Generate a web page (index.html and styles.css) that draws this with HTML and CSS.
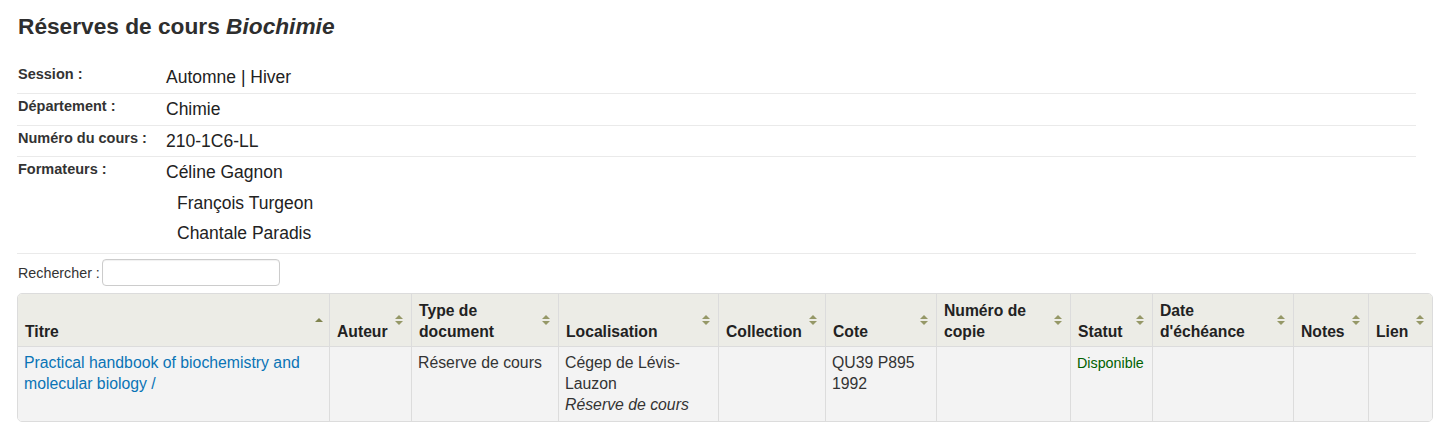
FILE: index.html
```html
<!DOCTYPE html>
<html lang="fr">
<head>
<meta charset="utf-8">
<title>Réserves de cours Biochimie</title>
<link rel="stylesheet" href="styles.css">
</head>
<body>
<div class="page">
  <h1 class="title">Réserves de cours <i>Biochimie</i></h1>

  <div class="details">
    <div class="row">
      <div class="label">Session :</div>
      <div class="value">Automne | Hiver</div>
    </div>
    <div class="row">
      <div class="label">Département :</div>
      <div class="value">Chimie</div>
    </div>
    <div class="row row-tight">
      <div class="label">Numéro du cours :</div>
      <div class="value">210-1C6-LL</div>
    </div>
    <div class="row">
      <div class="label">Formateurs :</div>
      <div class="value instructors">
        <div class="instructor">Céline Gagnon</div>
        <div class="instructor indent">François Turgeon</div>
        <div class="instructor indent">Chantale Paradis</div>
      </div>
    </div>
  </div>

  <div class="search">
    <label class="search-label" for="q">Rechercher :</label>
    <input id="q" class="search-input" type="text">
  </div>

  <div class="table-wrap">
    <table class="reserves">
      <colgroup>
        <col class="c-titre">
        <col class="c-auteur">
        <col class="c-type">
        <col class="c-loc">
        <col class="c-coll">
        <col class="c-cote">
        <col class="c-copie">
        <col class="c-statut">
        <col class="c-date">
        <col class="c-notes">
        <col class="c-lien">
      </colgroup>
      <thead>
        <tr>
          <th class="sort asc">Titre</th>
          <th class="sort both">Auteur</th>
          <th class="sort both">Type de document</th>
          <th class="sort both">Localisation</th>
          <th class="sort both">Collection</th>
          <th class="sort both">Cote</th>
          <th class="sort both">Numéro de copie</th>
          <th class="sort both">Statut</th>
          <th class="sort both">Date d'échéance</th>
          <th class="sort both">Notes</th>
          <th class="sort both last">Lien</th>
        </tr>
      </thead>
      <tbody>
        <tr>
          <td><a class="title-link" href="#">Practical handbook of biochemistry and molecular biology /</a></td>
          <td></td>
          <td>Réserve de cours</td>
          <td>Cégep de Lévis-Lauzon<span class="shelving">Réserve de cours</span></td>
          <td></td>
          <td>QU39 P895 1992</td>
          <td></td>
          <td><span class="available">Disponible</span></td>
          <td></td>
          <td></td>
          <td class="last"></td>
        </tr>
      </tbody>
    </table>
  </div>
</div>
</body>
</html>
```

FILE: styles.css
```css
* { box-sizing: border-box; }

html, body {
  margin: 0;
  padding: 0;
  background: #ffffff;
}

body {
  font-family: "Liberation Sans", Arial, sans-serif;
  color: #333333;
}

.page {
  padding: 0 0 0 17px;
}

.title {
  margin: 14px 0 24px 1px;
  font-size: 22.7px;
  line-height: 24px;
  font-weight: bold;
  color: #2e2e2e;
}

.title i {
  font-style: italic;
}

/* details list */
.details {
  width: 1399px;
}

.row {
  display: flex;
  border-bottom: 1px solid #eaeaea;
}

.label {
  width: 149px;
  flex: none;
  padding: 2px 0 0 1px;
  font-size: 14.5px;
  line-height: 20px;
  font-weight: bold;
  color: #333333;
}

.value {
  font-size: 17.5px;
  line-height: 31px;
  color: #222222;
}

.row-tight .value {
  line-height: 30px;
}

.instructors {
  padding-bottom: 5px;
}

.instructor.indent {
  line-height: 30px;
  padding-left: 11px;
}

/* search */
.search {
  display: flex;
  align-items: center;
  margin-top: 5px;
}

.search-label {
  font-size: 14.3px;
  color: #333333;
  padding-left: 1px;
}

.search-input {
  margin: 0 0 0 2px;
  width: 178px;
  height: 27px;
  border: 1px solid #cccccc;
  border-radius: 4px;
  box-shadow: inset 0 1px 1px rgba(0, 0, 0, 0.06);
  background: #ffffff;
  font: inherit;
  padding: 2px 4px;
}

/* table */
.table-wrap {
  margin-top: 7px;
  width: 1416px;
  border: 1px solid #dcdcdc;
  border-radius: 5px;
  overflow: hidden;
}

.reserves {
  width: 1414px;
  table-layout: fixed;
  border-collapse: separate;
  border-spacing: 0;
}

.c-titre { width: 312px; }
.c-auteur { width: 82px; }
.c-type { width: 147px; }
.c-loc { width: 160px; }
.c-coll { width: 107px; }
.c-cote { width: 111px; }
.c-copie { width: 134px; }
.c-statut { width: 82px; }
.c-date { width: 141px; }
.c-notes { width: 75px; }
.c-lien { width: 63px; }

.reserves th {
  position: relative;
  background: #ecece6;
  color: #222222;
  font-size: 15.7px;
  line-height: 21px;
  font-weight: bold;
  text-align: left;
  vertical-align: bottom;
  padding: 6px 24px 4px 7px;
  border-right: 1px solid #dcdcdc;
  border-bottom: 1px solid #dcdcdc;
}

.reserves td {
  background: #f3f3f3;
  color: #333333;
  font-size: 15.8px;
  line-height: 21px;
  vertical-align: top;
  padding: 5px 6px 6px 6px;
  border-right: 1px solid #dcdcdc;
}

.reserves th.last,
.reserves td.last {
  border-right: none;
}

/* sort indicators */
.sort.both::before,
.sort.both::after {
  content: "";
  position: absolute;
  right: 8px;
  width: 0;
  height: 0;
  border-left: 4px solid transparent;
  border-right: 4px solid transparent;
}

.sort.both::before {
  top: calc(50% - 5px);
  border-bottom: 4px solid #959867;
}

.sort.both::after {
  top: calc(50% + 1px);
  border-top: 4px solid #959867;
}

.sort.asc::before {
  content: "";
  position: absolute;
  right: 6px;
  top: calc(50% - 2px);
  width: 0;
  height: 0;
  border-left: 4.5px solid transparent;
  border-right: 4.5px solid transparent;
  border-bottom: 4px solid #80844f;
}

.title-link {
  color: #0a74b6;
  text-decoration: none;
}

.shelving {
  display: block;
  font-style: italic;
}

.available {
  color: #006100;
  font-size: 14.3px;
}
```
